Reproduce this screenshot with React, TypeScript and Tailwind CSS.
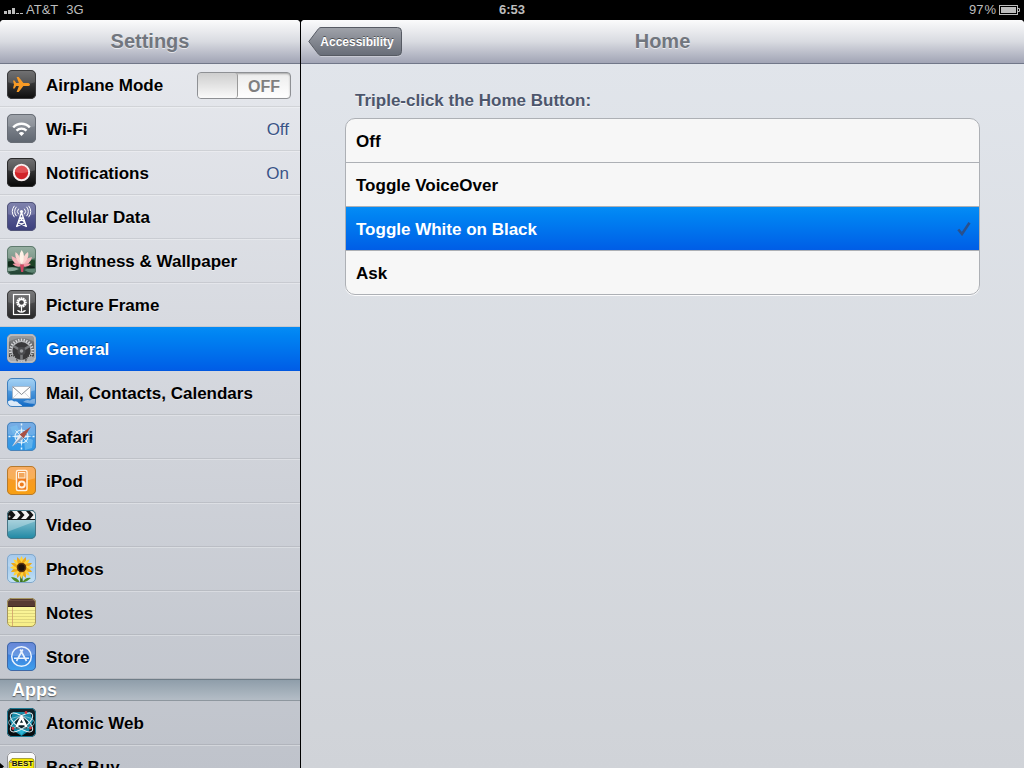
import React from 'react';

const FONT = "font-['Liberation_Sans',Arial,sans-serif]";
const BAR = 'bg-linear-to-b from-[#fbfbfc] via-[#d9dbe1] to-[#a1a4b5] border-b border-[#717789]';
const BAR_TITLE = 'pb-0.5 text-[20px] font-bold text-[#71767e] text-shadow-[0_1px_0_rgb(255_255_255/0.6)]';

// Every settings icon shares the same rounded 29px tile.
function Tile({
  id,
  from,
  to,
  edge,
  gloss = 0.25,
  outside,
  children,
}: {
  id: string;
  from: string;
  to: string;
  edge: string;
  gloss?: number;
  outside?: React.ReactNode;
  children: React.ReactNode;
}) {
  return (
    <svg viewBox="0 0 29 29" className="size-[29px] shrink-0 overflow-visible" aria-hidden="true">
      <defs>
        <linearGradient id={`${id}-bg`} x1="0" y1="0" x2="0" y2="1">
          <stop offset="0" stopColor={from} />
          <stop offset="1" stopColor={to} />
        </linearGradient>
        <clipPath id={`${id}-clip`}>
          <rect width="29" height="29" rx="5" />
        </clipPath>
      </defs>
      {outside}
      <g clipPath={`url(#${id}-clip)`}>
        <rect width="29" height="29" fill={`url(#${id}-bg)`} />
        <path d="M0 0H29V12Q14.500 17 0 12Z" fill="#fff" opacity={gloss} />
        {children}
      </g>
      <rect x=".5" y=".5" width="28" height="28" rx="4.500" fill="none" stroke={edge} />
    </svg>
  );
}

const spokes = (n: number) => Array.from({ length: n }, (_, i) => (i * 360) / n);

function AirplaneIcon() {
  return (
    <Tile id="air" from="#5b5b5d" to="#0c0c0c" edge="#3b3b3d" gloss={0.15}>
      <path
        d="M23 14.500c0-1-1.200-1.600-2.600-1.600h-4L11.700 7H9.600l2.300 5.900H9.200L7.600 10.600H6l1 3.900-1 3.900h1.600L9.200 16.100h2.700L9.600 22h2.100l4.700-5.900h4c1.400 0 2.600-.6 2.600-1.600Z"
        fill="#f79a25"
      />
    </Tile>
  );
}

function WifiIcon() {
  return (
    <Tile id="wifi" from="#92979f" to="#5e656f" edge="#686d75" gloss={0.12}>
      <g fill="none" stroke="#fff" strokeWidth="2.400">
        <path d="M6.200 13.300a11.600 11.600 0 0 1 16.600 0" />
        <path d="M9.500 16.700a7 7 0 0 1 10 0" />
      </g>
      <path d="M11.800 19.300a3.900 3.900 0 0 1 5.400 0L14.500 22Z" fill="#fff" />
    </Tile>
  );
}

function NotificationsIcon() {
  return (
    <Tile id="note" from="#59595b" to="#050505" edge="#2b2b2c" gloss={0.15}>
      <circle cx="14.500" cy="14.500" r="7.700" fill="#d22429" stroke="#f8eeee" strokeWidth="2" />
      <path d="M8 14a6.500 6.500 0 0 1 13 0Q14.500 16 8 14Z" fill="#f17e80" opacity=".5" />
    </Tile>
  );
}

function CellularIcon() {
  return (
    <Tile id="cell" from="#696da0" to="#3b3e7c" edge="#525579" gloss={0.15}>
      <g fill="none" stroke="#fff" strokeWidth="1.300">
        <path d="M14.500 10.500 9.500 25M14.500 10.500l5 14.500M12.800 16l5.300 4.500M16.200 16l-5.300 4.500M11 20.500l8.300 4M18 20.500l-8.300 4M12.700 16h3.600" />
        <path d="M11.700 12.300a4 4 0 0 1 0-5.600M17.300 12.300a4 4 0 0 0 0-5.600M9.500 14.200a7 7 0 0 1 0-9.400M19.500 14.200a7 7 0 0 0 0-9.400M7.400 15.200a9.500 9.500 0 0 1 0-11.400M21.600 15.200a9.500 9.500 0 0 0 0-11.400" strokeWidth="1" />
      </g>
      <circle cx="14.500" cy="9.500" r="1.600" fill="#fff" />
    </Tile>
  );
}

function BrightnessIcon() {
  return (
    <Tile id="lotus" from="#6b907c" to="#1f4030" edge="#5f7a6e" gloss={0.3}>
      <ellipse cx="5" cy="18" rx="8" ry="3" fill="#102a1a" />
      <ellipse cx="25" cy="17" rx="7" ry="3" fill="#1d4325" />
      <path d="M0 22q7-2 12 1-6 3-12 2Z" fill="#88a698" />
      <path d="M17 24q6-3 12-1v3q-6 2-12-2Z" fill="#5d8472" />
      <path d="M18 21q6-2 11 0-5 3-11 0Z" fill="#0f2419" />
      <path d="M14.500 20Q5 18 4.500 10q7 2 10 10Z" fill="#f4b3b9" />
      <path d="M15 20q9-2 10-9-8 1-10 9Z" fill="#f4b3b9" />
      <path d="M14.500 19Q7 13 8.500 6q5.500 4 6 13Z" fill="#fad3cf" />
      <path d="M15 19q8-6 6-13-6 4-6 13Z" fill="#fad3cf" />
      <path d="M14.700 19q-4.500-9 0-15 4.500 6 0 15Z" fill="#fff1e7" />
      <path d="M5.500 18q6-2 9.500 2-6 2-9.500-2ZM24 18q-6-2-9.500 2 6 2 9.500-2Z" fill="#ee98a4" />
      <path d="M13 18.500h4l-.8 7.500h-2Z" fill="#cf4763" />
    </Tile>
  );
}

function PictureFrameIcon() {
  return (
    <Tile id="frame" from="#68686a" to="#252526" edge="#3c3c3d" gloss={0.12}>
      <rect x="6.500" y="4.500" width="16" height="20" fill="none" stroke="#fff" strokeWidth="1.200" />
      {spokes(12).map((a) => (
        <path key={a} d="M14.500 12.500V7.200" stroke="#fff" strokeWidth="1.600" transform={`rotate(${a} 14.500 12.500)`} />
      ))}
      <circle cx="14.500" cy="12.500" r="4" fill="#fff" />
      <circle cx="14.500" cy="12.500" r="2.300" fill="#454547" />
      <path d="M14.500 17v5.500" stroke="#fff" strokeWidth="1.200" />
      <path d="M14.500 22.800q-1-2.800-4.500-2.800 1 2.800 4.500 2.800Zm0 0q1-2.800 4.500-2.800-1 2.800-4.500 2.800Z" fill="#fff" />
    </Tile>
  );
}

function GeneralIcon() {
  return (
    <Tile id="gen" from="#8c8e91" to="#2f3032" edge="#b4b6b9" gloss={0}>
      <path d="M0 0h29v9Q14.500-1 0 9Z" fill="#a4a6a9" opacity=".6" />
      {spokes(26).map((a) => (
        <path key={a} d="M14.500 17V4.500" stroke="#d9dadc" strokeWidth="1.300" transform={`rotate(${a} 14.500 17)`} />
      ))}
      <circle cx="14.500" cy="17" r="10.300" fill="#b5b7ba" />
      <circle cx="14.500" cy="17" r="9" fill="#39393b" />
      <path d="M14.500 17 6.500 12M14.500 17l8-5M14.500 17v9" stroke="#77797c" strokeWidth="2.600" />
      <circle cx="14.500" cy="17" r="4" fill="#4c4d50" />
      <circle cx="14.500" cy="17" r="1.800" fill="#9b9da0" />
      <circle cx="5" cy="26.500" r="5" fill="#a8aaad" stroke="#333" strokeWidth="1.500" strokeDasharray="1.200 1" />
      <circle cx="24" cy="26.500" r="5" fill="#a8aaad" stroke="#333" strokeWidth="1.500" strokeDasharray="1.200 1" />
      <rect x="1.200" y="1.200" width="26.600" height="26.600" rx="4" fill="none" stroke="#c2c4c7" strokeWidth="1.200" />
    </Tile>
  );
}

function MailIcon() {
  return (
    <Tile id="mail" from="#84c3f2" to="#0f68c4" edge="#3f7fbd" gloss={0.25}>
      <path d="M0 24q4-3 7-.5 3-1 5 2 3 1 4 3.500H0Z" fill="#fff" opacity=".85" />
      <path d="M16 24q4-3 7-1.500 3-2.500 6-1.500v5q-6 0-13-2Z" fill="#fff" opacity=".4" />
      <rect x="5.500" y="8.500" width="18" height="12" fill="#fdfdfd" stroke="#9aa6b5" strokeWidth=".6" />
      <path d="m6 9 8.500 7.500L23 9" fill="none" stroke="#777d84" strokeWidth=".9" />
      <path d="m6 20 5.800-5.700M23 20l-5.800-5.700" fill="none" stroke="#c5c9ce" strokeWidth=".7" />
    </Tile>
  );
}

function SafariIcon() {
  return (
    <Tile id="saf" from="#5798de" to="#2b99e8" edge="#4a83b8" gloss={0.2}>
      <path d="M17 18q5-3 9 0l-1 8-7 2ZM3 5l7-2 2 5-6 4Z" fill="#7cc3f0" opacity=".6" />
      <circle cx="14.500" cy="14.500" r="6.500" fill="none" stroke="#d6edfa" strokeWidth="1.100" />
      <path d="m14.500 4 1.500 9 9 1.500-9 1.500-1.500 9-1.500-9-9-1.500 9-1.500Z" fill="#eef8fd" opacity=".9" />
      <path d="m8.500 8.500 12 12M20.500 8.500l-12 12" stroke="#e5f4fc" strokeWidth=".9" />
      <path d="M14.500 1.500v2M14.500 25.500v2M1.500 14.500h2M25.500 14.500h2" stroke="#e5f4fc" strokeWidth="1.500" />
      <path d="M24 4.500 16.500 16.500l-4-4Z" fill="#a95044" />
      <path d="m5 24.500 7.500-12 4 4Z" fill="#e8eaf0" />
      <path d="m5 24.500 9.500-10 2 2Z" fill="#8c9eb8" />
    </Tile>
  );
}

function IpodIcon() {
  return (
    <Tile id="ipod" from="#f5953a" to="#f9a010" edge="#b57a2e" gloss={0.22}>
      <rect x="9.500" y="4.500" width="10.500" height="20" rx="1.500" fill="#ed7a1c" stroke="#fff2df" strokeWidth="1.500" />
      <rect x="11.500" y="6.500" width="6.500" height="5.500" fill="#f2a75d" stroke="#fff2df" />
      <circle cx="14.800" cy="18.500" r="3" fill="none" stroke="#fff2df" strokeWidth="1.900" />
    </Tile>
  );
}

function VideoIcon() {
  return (
    <Tile id="vid" from="#b5dae4" to="#1d87a3" edge="#467585" gloss={0}>
      <path d="M0 22 29 11V9H0Z" fill="#fff" opacity=".3" />
      <rect width="29" height="10" fill="#131313" />
      <path d="M5 1h5l3.500 4h-5ZM14 1h5l3.500 4h-5ZM23 1h5l1 1v3h-2.500ZM8.500 5h5L10 9H5ZM17.500 5h5L19 9h-5ZM26.500 5H29v3l-1 1h-5Z" fill="#f2f2f2" />
      <circle cx="2.500" cy="6.500" r="1" fill="#bbb" />
    </Tile>
  );
}

function PhotosIcon() {
  return (
    <Tile id="pho" from="#8dbbe8" to="#c3e1f5" edge="#82a7c9" gloss={0.2}>
      <path d="M14 18q-1 6-1 11h3q-1-5 0-11Z" fill="#3c7120" />
      <path d="M13 29q-6-1-9-6 7 0 9 6ZM15 29q5-1 9-5-6-1-9 5Z" fill="#508b26" />
      {spokes(16).map((a) => (
        <path key={a} d="M14.500 13.500q-3.500-6 0-11.500 3.500 5.500 0 11.500Z" fill={a % 45 ? '#efa815' : '#ffd33b'} transform={`rotate(${a} 14.500 13.500)`} />
      ))}
      <circle cx="14.500" cy="13.500" r="4.800" fill="#5a3210" />
      <circle cx="14.500" cy="13.500" r="3.200" fill="#1d1209" />
    </Tile>
  );
}

function NotesIcon() {
  return (
    <Tile id="notes" from="#fbf7a5" to="#f7ee85" edge="#a5965f" gloss={0}>
      <path d="M0 12.500h29M0 15.500h29M0 18.500h29M0 21.500h29M0 24.500h29" stroke="#d8cf78" strokeWidth=".8" />
      <path d="M5.500 8v21" stroke="#cf9d6a" strokeWidth=".8" />
      <rect width="29" height="8" fill="#573a32" />
      <path d="M0 2.500h29" stroke="#6d4e43" />
      <path d="M0 8.500h29" stroke="#3d271f" />
    </Tile>
  );
}

function StoreIcon() {
  return (
    <Tile id="store" from="#3c62cc" to="#3fa2ee" edge="#4068a5" gloss={0.22}>
      <g fill="none" stroke="#eaf3fd">
        <circle cx="14.500" cy="14.500" r="9.800" strokeWidth="1.500" />
        <path d="m15.800 7.500-6.300 11.500M13.200 7.500 19.500 19M7 16.300h15" strokeWidth="1.600" />
      </g>
    </Tile>
  );
}

function AtomicIcon() {
  return (
    <Tile id="atom" from="#14242b" to="#06090b" edge="#1e7a93" gloss={0}>
      <path d="M6 4h17l3 9-4 10-7.500 5L7 23 3 13Z" fill="#178ba8" />
      <path d="m8 13 6.500-7L21 13l-1 8H9Z" fill="#0a2027" />
      <path d="m10 22 4.500 5 4.500-5Z" fill="#2cb7d8" />
      <g fill="none" stroke="#dfeef2">
        <ellipse cx="14.500" cy="14.500" rx="13.500" ry="5.500" transform="rotate(38 14.500 14.500)" />
        <ellipse cx="14.500" cy="14.500" rx="13.500" ry="5.500" transform="rotate(-38 14.500 14.500)" />
        <ellipse cx="14.500" cy="14.500" rx="13" ry="6" stroke="#9fd2df" strokeWidth=".7" />
      </g>
      <path d="m9.500 19 5-10 5 10M11.500 16h6" fill="none" stroke="#fff" strokeWidth="2.500" />
      <circle cx="19" cy="4.500" r="1.400" fill="#d4343b" />
      <circle cx="6" cy="20.500" r="1.400" fill="#d4343b" />
      <circle cx="23.500" cy="20" r="1.400" fill="#d4343b" />
    </Tile>
  );
}

function BestBuyIcon() {
  return (
    <Tile id="bb" from="#ffffff" to="#e5e5e5" edge="#8f9196" gloss={0} outside={<path d="M-7 11 -3 14.500-7 18Z" fill="#000" />}>
      <path d="M5 6.500h19.500q2.500 0 2.500 2.500v15H5L2 21V10Z" fill="#f4e700" stroke="#6f6a14" strokeWidth=".6" />
      <circle cx="4" cy="9.500" r="1" fill="#fff" stroke="#333" strokeWidth=".5" />
      <g fill="#111" fontFamily="Liberation Sans, Arial, sans-serif" fontWeight="bold" fontSize="8" textAnchor="middle">
        <text x="15.500" y="14">BEST</text>
        <text x="15.500" y="21">BUY</text>
      </g>
    </Tile>
  );
}

type Item = { label: string; icon: () => React.JSX.Element; value?: string };

const SETTINGS: Item[] = [
  { label: 'Wi-Fi', icon: WifiIcon, value: 'Off' },
  { label: 'Notifications', icon: NotificationsIcon, value: 'On' },
  { label: 'Cellular Data', icon: CellularIcon },
  { label: 'Brightness & Wallpaper', icon: BrightnessIcon },
  { label: 'Picture Frame', icon: PictureFrameIcon },
  { label: 'General', icon: GeneralIcon },
  { label: 'Mail, Contacts, Calendars', icon: MailIcon },
  { label: 'Safari', icon: SafariIcon },
  { label: 'iPod', icon: IpodIcon },
  { label: 'Video', icon: VideoIcon },
  { label: 'Photos', icon: PhotosIcon },
  { label: 'Notes', icon: NotesIcon },
  { label: 'Store', icon: StoreIcon },
];

const APPS: Item[] = [
  { label: 'Atomic Web', icon: AtomicIcon },
  { label: 'Best Buy', icon: BestBuyIcon },
];

const OPTIONS = ['Off', 'Toggle VoiceOver', 'Toggle White on Black', 'Ask'];

const ROW = 'flex h-11 w-full items-center gap-2.5 border-b pl-[7px] text-left text-[17px]';
const ROW_IDLE = 'border-black/8 text-black text-shadow-[0_1px_0_rgb(255_255_255/0.5)] shadow-[0_1px_0_rgb(255_255_255/0.3)]';
const ROW_ACTIVE = 'border-[#0058e0] bg-linear-to-b from-[#058cf5] to-[#015de6] text-white text-shadow-[0_-1px_0_rgb(0_0_0/0.4)]';

function StatusBar() {
  return (
    <div className="grid h-5 shrink-0 grid-cols-[1fr_auto_1fr] items-center bg-black px-1 text-[13px] font-bold text-[#bdbdbd]">
      <div className="flex items-center gap-2">
        <span className="flex items-center gap-0.5 font-normal">
          <svg viewBox="0 0 20 7" className="h-[7px] w-5" fill="#bdbdbd" role="img" aria-label="Signal strength">
            <path d="M0 4h3v3H0zM4 3h3v4H4zM8 1h3v6H8zM12 6h3v1h-3zM16 6h3v1h-3z" />
          </svg>
          AT&amp;T
        </span>
        <span className="font-normal">3G</span>
      </div>
      <span>6:53</span>
      <div className="flex items-center justify-end gap-[3px]">
        <span className="flex gap-px font-normal">
          <span>97</span>
          <span>%</span>
        </span>
        <svg viewBox="0 0 21 10" className="h-2.5 w-[21px]" role="img" aria-label="Battery">
          <rect x=".5" y=".5" width="18" height="9" fill="none" stroke="#bdbdbd" />
          <rect x="2" y="2" width="15" height="6" fill="#bdbdbd" />
          <path d="M19 3.500h1.500v3H19" fill="none" stroke="#bdbdbd" />
        </svg>
      </div>
    </div>
  );
}

function SettingsRow({ item, active, onSelect }: { item: Item; active: boolean; onSelect: () => void }) {
  const Icon = item.icon;
  return (
    <li>
      <button type="button" onClick={onSelect} className={`${ROW} pr-[11px] ${active ? ROW_ACTIVE : ROW_IDLE}`}>
        <Icon />
        <span className="grow pt-0.5 font-bold">{item.label}</span>
        {item.value && <span className={`pt-0.5 ${active ? 'text-white' : 'text-[#3a5487]'}`}>{item.value}</span>}
      </button>
    </li>
  );
}

function AirplaneRow() {
  const [on, setOn] = React.useState(false);
  return (
    <li className={`${ROW} pr-[9px] ${ROW_IDLE}`}>
      <AirplaneIcon />
      <label htmlFor="airplane" className="grow pt-0.5 font-bold">
        Airplane Mode
      </label>
      <label
        className={`mt-0.5 flex h-[27px] w-[94px] overflow-hidden rounded border border-[#8e9094] text-[16px] font-bold shadow-[inset_0_1px_2px_rgb(0_0_0/0.3)] ${
          on ? 'flex-row-reverse bg-[#0b6ae4] text-white' : 'bg-linear-to-b from-[#ececec] to-white text-[#7f7f7f]'
        }`}
      >
        <input
          id="airplane"
          type="checkbox"
          role="switch"
          checked={on}
          onChange={(e) => setOn(e.target.checked)}
          className="m-0 w-10 appearance-none rounded-[3px] border-r border-[#9a9a9a] bg-linear-to-b from-[#cecece] to-[#fafafa]"
        />
        <span className="grow self-center pt-0.5 text-center">{on ? 'ON' : 'OFF'}</span>
      </label>
    </li>
  );
}

function Sidebar() {
  const [selected, setSelected] = React.useState('General');
  const rows = (items: Item[]) =>
    items.map((it) => (
      <SettingsRow key={it.label} item={it} active={it.label === selected} onSelect={() => setSelected(it.label)} />
    ));

  return (
    <aside className="flex w-[300px] shrink-0 flex-col overflow-hidden rounded-t-[4px] bg-linear-to-b from-[#e8eaef] to-[#bfc3cb]">
      <header className={`z-10 flex h-11 shrink-0 items-center justify-center ${BAR}`}>
        <h1 className={BAR_TITLE}>Settings</h1>
      </header>
      <nav className="-mt-px min-h-0 grow overflow-y-auto [scrollbar-width:none]">
        <ul>
          <AirplaneRow />
          {rows(SETTINGS)}
        </ul>
        <h2 className="h-[22px] border-y border-t-[#6f7c87] border-b-[#8e979f] bg-linear-to-b from-[#8f9eaa] to-[#b4bdc6] pl-3 text-[18px] leading-5 font-bold text-white text-shadow-[0_1px_1px_rgb(0_0_0/0.5)]">
          Apps
        </h2>
        <ul>{rows(APPS)}</ul>
      </nav>
    </aside>
  );
}

function BackButton() {
  return (
    <button type="button" className="grid h-[30px] w-[94px] place-items-center justify-self-start">
      <svg viewBox="0 0 94 30" className="col-start-1 row-start-1 h-[30px] w-[94px]" aria-hidden="true">
        <defs>
          <linearGradient id="back-bg" x1="0" y1="0" x2="0" y2="1">
            <stop offset="0" stopColor="#a0a3aa" />
            <stop offset="1" stopColor="#676c77" />
          </linearGradient>
        </defs>
        <path d="M13 29.500H89.500q4 0 4-4V5.500q0-4-4-4H13q-1.500 0-2.500 1.200L.8 15.200l9.700 12.600Q11.500 29.500 13 29.500Z" fill="#fff" opacity=".6" />
        <path d="M13 28.500H89.500q4 0 4-4V4.500q0-4-4-4H13q-1.500 0-2.500 1.200L.8 14.500l9.700 12.800Q11.500 28.500 13 28.500Z" fill="url(#back-bg)" stroke="#565a63" />
      </svg>
      <span className="col-start-1 row-start-1 pl-1 text-[12px] font-bold text-white text-shadow-[0_-1px_0_rgb(0_0_0/0.45)]">
        Accessibility
      </span>
    </button>
  );
}

function HomePanel() {
  const [choice, setChoice] = React.useState('Toggle White on Black');

  return (
    <main className="flex min-w-0 grow flex-col overflow-hidden rounded-t-[4px] bg-linear-to-b from-[#e2e6ec] to-[#d0d3d8]">
      <header className={`grid h-11 shrink-0 grid-cols-[1fr_auto_1fr] items-center px-[7px] ${BAR}`}>
        <BackButton />
        <h1 className={BAR_TITLE}>Home</h1>
      </header>
      <section className="px-11 pt-[25px]">
        <h2
          id="triple-click"
          className="mb-[5px] pl-2.5 text-[17px] leading-6 font-bold text-[#4d566c] text-shadow-[0_1px_0_rgb(255_255_255/0.8)]"
        >
          Triple-click the Home Button:
        </h2>
        <div
          role="radiogroup"
          aria-labelledby="triple-click"
          className="overflow-hidden rounded-[10px] border border-[#adb0b5] bg-[#f7f7f7] shadow-[0_1px_0_rgb(255_255_255/0.9)]"
        >
          {OPTIONS.map((o) => (
            <label
              key={o}
              className={`flex h-11 items-center justify-between border-b border-[#adb0b5] pr-2 pl-2.5 text-[17px] font-bold last:h-[43px] last:border-b-0 ${
                o === choice ? 'bg-linear-to-b from-[#058cf5] to-[#015de6] text-white' : 'text-black'
              }`}
            >
              <input
                type="radio"
                name="triple-click"
                checked={o === choice}
                onChange={() => setChoice(o)}
                className="m-0 size-0 appearance-none"
              />
              <span className="grow pt-0.5">{o}</span>
              {o === choice && (
                <svg viewBox="0 0 14 14" className="size-3.5" aria-hidden="true">
                  <path d="M1.300 7.500 5 12 12.500 .8" fill="none" stroke="#29508c" strokeWidth="2.600" />
                </svg>
              )}
            </label>
          ))}
        </div>
      </section>
    </main>
  );
}

export default function App() {
  return (
    <div className={`flex h-screen flex-col overflow-hidden bg-black ${FONT}`}>
      <StatusBar />
      <div className="flex min-h-0 grow gap-px">
        <Sidebar />
        <HomePanel />
      </div>
    </div>
  );
}
